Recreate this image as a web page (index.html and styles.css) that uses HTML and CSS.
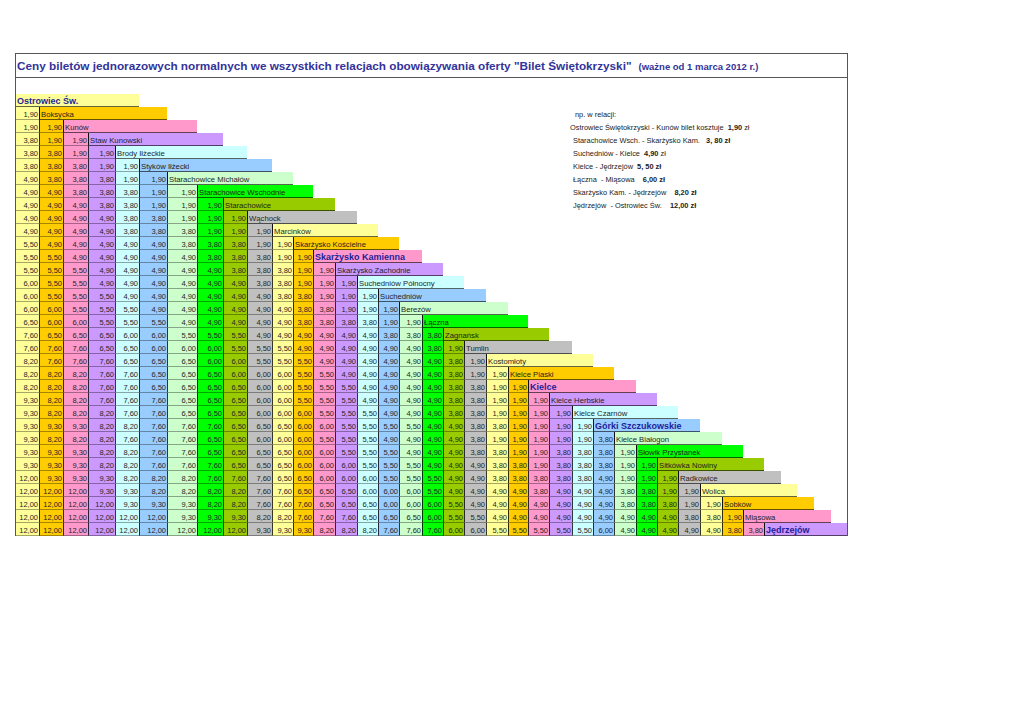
FILE: index.html
```html
<!DOCTYPE html>
<html lang="pl">
<head>
<meta charset="utf-8">
<title>Ceny biletów - Bilet Świętokrzyski</title>
<link rel="stylesheet" href="styles.css">
</head>
<body>
<div class="sheet">
  <div class="title">Ceny biletów jednorazowych normalnych we wszystkich relacjach obowiązywania oferty "Bilet Świętokrzyski"<span class="valid">(ważne od 1 marca 2012 r.)</span></div>
  <div class="body">
    <div class="rows">
      <div class="r"><span class="n h">Ostrowiec Św.</span></div>
      <div class="r"><span>1,90</span><span class="n">Boksycka</span></div>
      <div class="r"><span>1,90</span><span>1,90</span><span class="n">Kunów</span></div>
      <div class="r"><span>3,80</span><span>1,90</span><span>1,90</span><span class="n">Staw Kunowski</span></div>
      <div class="r"><span>3,80</span><span>3,80</span><span>1,90</span><span>1,90</span><span class="n">Brody Iłżeckie</span></div>
      <div class="r"><span>3,80</span><span>3,80</span><span>3,80</span><span>1,90</span><span>1,90</span><span class="n">Styków Iłżecki</span></div>
      <div class="r"><span>4,90</span><span>3,80</span><span>3,80</span><span>3,80</span><span>1,90</span><span>1,90</span><span class="n">Starachowice Michałów</span></div>
      <div class="r"><span>4,90</span><span>4,90</span><span>3,80</span><span>3,80</span><span>3,80</span><span>1,90</span><span>1,90</span><span class="n">Starachowice Wschodnie</span></div>
      <div class="r"><span>4,90</span><span>4,90</span><span>4,90</span><span>3,80</span><span>3,80</span><span>1,90</span><span>1,90</span><span>1,90</span><span class="n">Starachowice</span></div>
      <div class="r"><span>4,90</span><span>4,90</span><span>4,90</span><span>4,90</span><span>3,80</span><span>3,80</span><span>1,90</span><span>1,90</span><span>1,90</span><span class="n">Wąchock</span></div>
      <div class="r"><span>4,90</span><span>4,90</span><span>4,90</span><span>4,90</span><span>3,80</span><span>3,80</span><span>3,80</span><span>1,90</span><span>1,90</span><span>1,90</span><span class="n">Marcinków</span></div>
      <div class="r"><span>5,50</span><span>4,90</span><span>4,90</span><span>4,90</span><span>4,90</span><span>4,90</span><span>3,80</span><span>3,80</span><span>3,80</span><span>1,90</span><span>1,90</span><span class="n">Skarżysko Kościelne</span></div>
      <div class="r"><span>5,50</span><span>5,50</span><span>4,90</span><span>4,90</span><span>4,90</span><span>4,90</span><span>4,90</span><span>3,80</span><span>3,80</span><span>3,80</span><span>1,90</span><span>1,90</span><span class="n h">Skarżysko Kamienna</span></div>
      <div class="r"><span>5,50</span><span>5,50</span><span>5,50</span><span>4,90</span><span>4,90</span><span>4,90</span><span>4,90</span><span>4,90</span><span>3,80</span><span>3,80</span><span>3,80</span><span>1,90</span><span>1,90</span><span class="n">Skarżysko Zachodnie</span></div>
      <div class="r"><span>6,00</span><span>5,50</span><span>5,50</span><span>4,90</span><span>4,90</span><span>4,90</span><span>4,90</span><span>4,90</span><span>4,90</span><span>3,80</span><span>3,80</span><span>1,90</span><span>1,90</span><span>1,90</span><span class="n">Suchedniów Północny</span></div>
      <div class="r"><span>6,00</span><span>5,50</span><span>5,50</span><span>5,50</span><span>4,90</span><span>4,90</span><span>4,90</span><span>4,90</span><span>4,90</span><span>4,90</span><span>3,80</span><span>3,80</span><span>1,90</span><span>1,90</span><span>1,90</span><span class="n">Suchedniów</span></div>
      <div class="r"><span>6,00</span><span>6,00</span><span>5,50</span><span>5,50</span><span>5,50</span><span>4,90</span><span>4,90</span><span>4,90</span><span>4,90</span><span>4,90</span><span>4,90</span><span>3,80</span><span>3,80</span><span>1,90</span><span>1,90</span><span>1,90</span><span class="n">Berezów</span></div>
      <div class="r"><span>6,50</span><span>6,00</span><span>6,00</span><span>5,50</span><span>5,50</span><span>5,50</span><span>4,90</span><span>4,90</span><span>4,90</span><span>4,90</span><span>4,90</span><span>3,80</span><span>3,80</span><span>3,80</span><span>3,80</span><span>1,90</span><span>1,90</span><span class="n">Łączna</span></div>
      <div class="r"><span>7,60</span><span>6,50</span><span>6,50</span><span>6,50</span><span>6,00</span><span>6,00</span><span>5,50</span><span>5,50</span><span>5,50</span><span>4,90</span><span>4,90</span><span>4,90</span><span>4,90</span><span>4,90</span><span>4,90</span><span>3,80</span><span>3,80</span><span>3,80</span><span class="n">Zagnańsk</span></div>
      <div class="r"><span>7,60</span><span>7,60</span><span>7,60</span><span>6,50</span><span>6,50</span><span>6,00</span><span>6,00</span><span>6,00</span><span>5,50</span><span>5,50</span><span>5,50</span><span>4,90</span><span>4,90</span><span>4,90</span><span>4,90</span><span>4,90</span><span>4,90</span><span>3,80</span><span>1,90</span><span class="n">Tumlin</span></div>
      <div class="r"><span>8,20</span><span>7,60</span><span>7,60</span><span>7,60</span><span>6,50</span><span>6,50</span><span>6,50</span><span>6,00</span><span>6,00</span><span>5,50</span><span>5,50</span><span>5,50</span><span>4,90</span><span>4,90</span><span>4,90</span><span>4,90</span><span>4,90</span><span>4,90</span><span>3,80</span><span>1,90</span><span class="n">Kostomłoty</span></div>
      <div class="r"><span>8,20</span><span>8,20</span><span>8,20</span><span>7,60</span><span>7,60</span><span>6,50</span><span>6,50</span><span>6,50</span><span>6,00</span><span>6,00</span><span>6,00</span><span>5,50</span><span>5,50</span><span>4,90</span><span>4,90</span><span>4,90</span><span>4,90</span><span>4,90</span><span>3,80</span><span>1,90</span><span>1,90</span><span class="n">Kielce Piaski</span></div>
      <div class="r"><span>8,20</span><span>8,20</span><span>8,20</span><span>7,60</span><span>7,60</span><span>6,50</span><span>6,50</span><span>6,50</span><span>6,50</span><span>6,00</span><span>6,00</span><span>5,50</span><span>5,50</span><span>5,50</span><span>4,90</span><span>4,90</span><span>4,90</span><span>4,90</span><span>3,80</span><span>3,80</span><span>1,90</span><span>1,90</span><span class="n h">Kielce</span></div>
      <div class="r"><span>9,30</span><span>8,20</span><span>8,20</span><span>7,60</span><span>7,60</span><span>7,60</span><span>6,50</span><span>6,50</span><span>6,50</span><span>6,00</span><span>6,00</span><span>5,50</span><span>5,50</span><span>5,50</span><span>4,90</span><span>4,90</span><span>4,90</span><span>4,90</span><span>3,80</span><span>3,80</span><span>1,90</span><span>1,90</span><span>1,90</span><span class="n">Kielce Herbskie</span></div>
      <div class="r"><span>9,30</span><span>8,20</span><span>8,20</span><span>8,20</span><span>7,60</span><span>7,60</span><span>6,50</span><span>6,50</span><span>6,50</span><span>6,00</span><span>6,00</span><span>6,00</span><span>5,50</span><span>5,50</span><span>5,50</span><span>4,90</span><span>4,90</span><span>4,90</span><span>3,80</span><span>3,80</span><span>1,90</span><span>1,90</span><span>1,90</span><span>1,90</span><span class="n">Kielce Czarnów</span></div>
      <div class="r"><span>9,30</span><span>9,30</span><span>9,30</span><span>8,20</span><span>8,20</span><span>7,60</span><span>7,60</span><span>7,60</span><span>6,50</span><span>6,50</span><span>6,50</span><span>6,00</span><span>6,00</span><span>5,50</span><span>5,50</span><span>5,50</span><span>5,50</span><span>4,90</span><span>4,90</span><span>3,80</span><span>3,80</span><span>1,90</span><span>1,90</span><span>1,90</span><span>1,90</span><span class="n h">Górki Szczukowskie</span></div>
      <div class="r"><span>9,30</span><span>8,20</span><span>8,20</span><span>8,20</span><span>7,60</span><span>7,60</span><span>7,60</span><span>6,50</span><span>6,50</span><span>6,00</span><span>6,00</span><span>6,00</span><span>5,50</span><span>5,50</span><span>5,50</span><span>4,90</span><span>4,90</span><span>4,90</span><span>4,90</span><span>3,80</span><span>1,90</span><span>1,90</span><span>1,90</span><span>1,90</span><span>1,90</span><span>3,80</span><span class="n">Kielce Białogon</span></div>
      <div class="r"><span>9,30</span><span>9,30</span><span>9,30</span><span>8,20</span><span>8,20</span><span>7,60</span><span>7,60</span><span>6,50</span><span>6,50</span><span>6,50</span><span>6,50</span><span>6,00</span><span>6,00</span><span>5,50</span><span>5,50</span><span>5,50</span><span>4,90</span><span>4,90</span><span>4,90</span><span>3,80</span><span>3,80</span><span>1,90</span><span>1,90</span><span>3,80</span><span>3,80</span><span>3,80</span><span>1,90</span><span class="n">Słowik Przystanek</span></div>
      <div class="r"><span>9,30</span><span>9,30</span><span>9,30</span><span>8,20</span><span>8,20</span><span>7,60</span><span>7,60</span><span>7,60</span><span>6,50</span><span>6,50</span><span>6,50</span><span>6,00</span><span>6,00</span><span>6,00</span><span>5,50</span><span>5,50</span><span>5,50</span><span>4,90</span><span>4,90</span><span>4,90</span><span>3,80</span><span>3,80</span><span>1,90</span><span>3,80</span><span>3,80</span><span>3,80</span><span>1,90</span><span>1,90</span><span class="n">Sitkówka Nowiny</span></div>
      <div class="r"><span>12,00</span><span>9,30</span><span>9,30</span><span>9,30</span><span>8,20</span><span>8,20</span><span>8,20</span><span>7,60</span><span>7,60</span><span>7,60</span><span>6,50</span><span>6,50</span><span>6,00</span><span>6,00</span><span>6,00</span><span>5,50</span><span>5,50</span><span>5,50</span><span>4,90</span><span>4,90</span><span>3,80</span><span>3,80</span><span>3,80</span><span>3,80</span><span>3,80</span><span>4,90</span><span>1,90</span><span>1,90</span><span>1,90</span><span class="n">Radkowice</span></div>
      <div class="r"><span>12,00</span><span>12,00</span><span>12,00</span><span>9,30</span><span>9,30</span><span>8,20</span><span>8,20</span><span>8,20</span><span>8,20</span><span>7,60</span><span>7,60</span><span>6,50</span><span>6,50</span><span>6,50</span><span>6,00</span><span>6,00</span><span>6,00</span><span>5,50</span><span>4,90</span><span>4,90</span><span>4,90</span><span>4,90</span><span>3,80</span><span>4,90</span><span>4,90</span><span>4,90</span><span>3,80</span><span>3,80</span><span>1,90</span><span>1,90</span><span class="n">Wolica</span></div>
      <div class="r"><span>12,00</span><span>12,00</span><span>12,00</span><span>12,00</span><span>9,30</span><span>9,30</span><span>9,30</span><span>8,20</span><span>8,20</span><span>7,60</span><span>7,60</span><span>7,60</span><span>6,50</span><span>6,50</span><span>6,50</span><span>6,00</span><span>6,00</span><span>6,00</span><span>5,50</span><span>4,90</span><span>4,90</span><span>4,90</span><span>4,90</span><span>4,90</span><span>4,90</span><span>4,90</span><span>3,80</span><span>3,80</span><span>3,80</span><span>1,90</span><span>1,90</span><span class="n">Sobków</span></div>
      <div class="r"><span>12,00</span><span>12,00</span><span>12,00</span><span>12,00</span><span>12,00</span><span>12,00</span><span>9,30</span><span>9,30</span><span>9,30</span><span>8,20</span><span>8,20</span><span>7,60</span><span>7,60</span><span>7,60</span><span>6,50</span><span>6,50</span><span>6,50</span><span>6,00</span><span>5,50</span><span>5,50</span><span>4,90</span><span>4,90</span><span>4,90</span><span>4,90</span><span>4,90</span><span>4,90</span><span>4,90</span><span>4,90</span><span>4,90</span><span>3,80</span><span>3,80</span><span>1,90</span><span class="n">Miąsowa</span></div>
      <div class="r"><span>12,00</span><span>12,00</span><span>12,00</span><span>12,00</span><span>12,00</span><span>12,00</span><span>12,00</span><span>12,00</span><span>12,00</span><span>9,30</span><span>9,30</span><span>9,30</span><span>8,20</span><span>8,20</span><span>8,20</span><span>7,60</span><span>7,60</span><span>7,60</span><span>6,00</span><span>6,00</span><span>5,50</span><span>5,50</span><span>5,50</span><span>5,50</span><span>5,50</span><span>6,00</span><span>4,90</span><span>4,90</span><span>4,90</span><span>4,90</span><span>4,90</span><span>3,80</span><span>3,80</span><span class="n h">Jędrzejów</span></div>
    </div>
    <div class="notes">
      <div class="np">np. w relacji:</div>
      <div class="first">Ostrowiec Świętokrzyski - Kunów bilet kosztuje  <b>1,90</b> zł</div>
      <div>Starachowice Wsch. - Skarżysko Kam.   <b>3, 80 zł</b></div>
      <div>Suchedniów - Kielce  <b>4,90</b> zł</div>
      <div>Kielce - Jędrzejów  <b>5, 50 zł</b></div>
      <div>Łączna  - Miąsowa    <b>6,00 zł</b></div>
      <div>Skarżysko Kam. - Jędrzejów    <b>8,20 zł</b></div>
      <div>Jędrzejów  - Ostrowiec Św.    <b>12,00 zł</b></div>
    </div>
  </div>
</div>
</body>
</html>
```

FILE: styles.css
```css
html, body {
  margin: 0;
  padding: 0;
  background: #ffffff;
}

body {
  font-family: "Liberation Sans", Arial, sans-serif;
  color: #222222;
}

.sheet {
  margin: 53px 0 0 15px;
  width: 833px;
  box-sizing: border-box;
  border: 1px solid #555555;
  border-bottom: 0;
}

.title {
  height: 24px;
  box-sizing: border-box;
  border-bottom: 1px solid #555555;
  padding-left: 1px;
  line-height: 23px;
  font-size: 11.75px;
  font-weight: bold;
  color: #333399;
  white-space: nowrap;
}

.title .valid {
  font-size: 9.5px;
  margin-left: 7px;
}

.body {
  display: grid;
  padding-top: 16px;
}

.rows,
.notes {
  grid-area: 1 / 1;
}

.r {
  display: grid;
  grid-template-columns: 23px 24px 25px 27px 24px 28px 30px 26px 24px 25px 21px 20px 22px 22px 21px 21px 23px 21px 21px 22px 22px 20px 21px 23px 21px 21px 22px 21px 21px 22px 22px 21px 21px 17px 16px 17px 17px 16px;
  height: 13px;
}

.r > span {
  box-sizing: border-box;
  height: 13px;
  border-left: 1px solid rgba(0, 0, 0, 0.78);
  border-bottom: 1px solid rgba(0, 0, 0, 0.35);
  padding: 3px 1px 0 0;
  font-size: 7.5px;
  line-height: 10px;
  text-align: right;
  white-space: nowrap;
  color: #262626;
}

.r > span:first-child {
  border-left: 0;
}

.r > :nth-child(10n+1) { background: #ffff99; }
.r > :nth-child(10n+2) { background: #ffcc00; }
.r > :nth-child(10n+3) { background: #ff99cc; }
.r > :nth-child(10n+4) { background: #cc99ff; }
.r > :nth-child(10n+5) { background: #ccffff; }
.r > :nth-child(10n+6) { background: #99ccff; }
.r > :nth-child(10n+7) { background: #ccffcc; }
.r > :nth-child(10n+8) { background: #00ff00; }
.r > :nth-child(10n+9) { background: #99cc00; }
.r > :nth-child(10n)   { background: #c0c0c0; }

.r > .n {
  grid-column: span 5;
  text-align: left;
  padding-left: 1px;
  font-size: 7.7px;
  border-left-color: #111111;
  border-bottom-color: rgba(0, 0, 0, 0.6);
  color: #1e1e1e;
}

.r > .h {
  font-weight: bold;
  font-size: 9px;
  color: #1f1f99;
  padding-top: 2px;
}

.notes {
  align-self: start;
  margin: 13px 0 0 557px;
  font-size: 7.4px;
  color: #222222;
}

.notes div {
  height: 13px;
  box-sizing: border-box;
  padding-top: 3px;
  line-height: 10px;
  white-space: pre;
}

.notes .np {
  padding-left: 2px;
}

.notes .first {
  margin-left: -3px;
}
```
